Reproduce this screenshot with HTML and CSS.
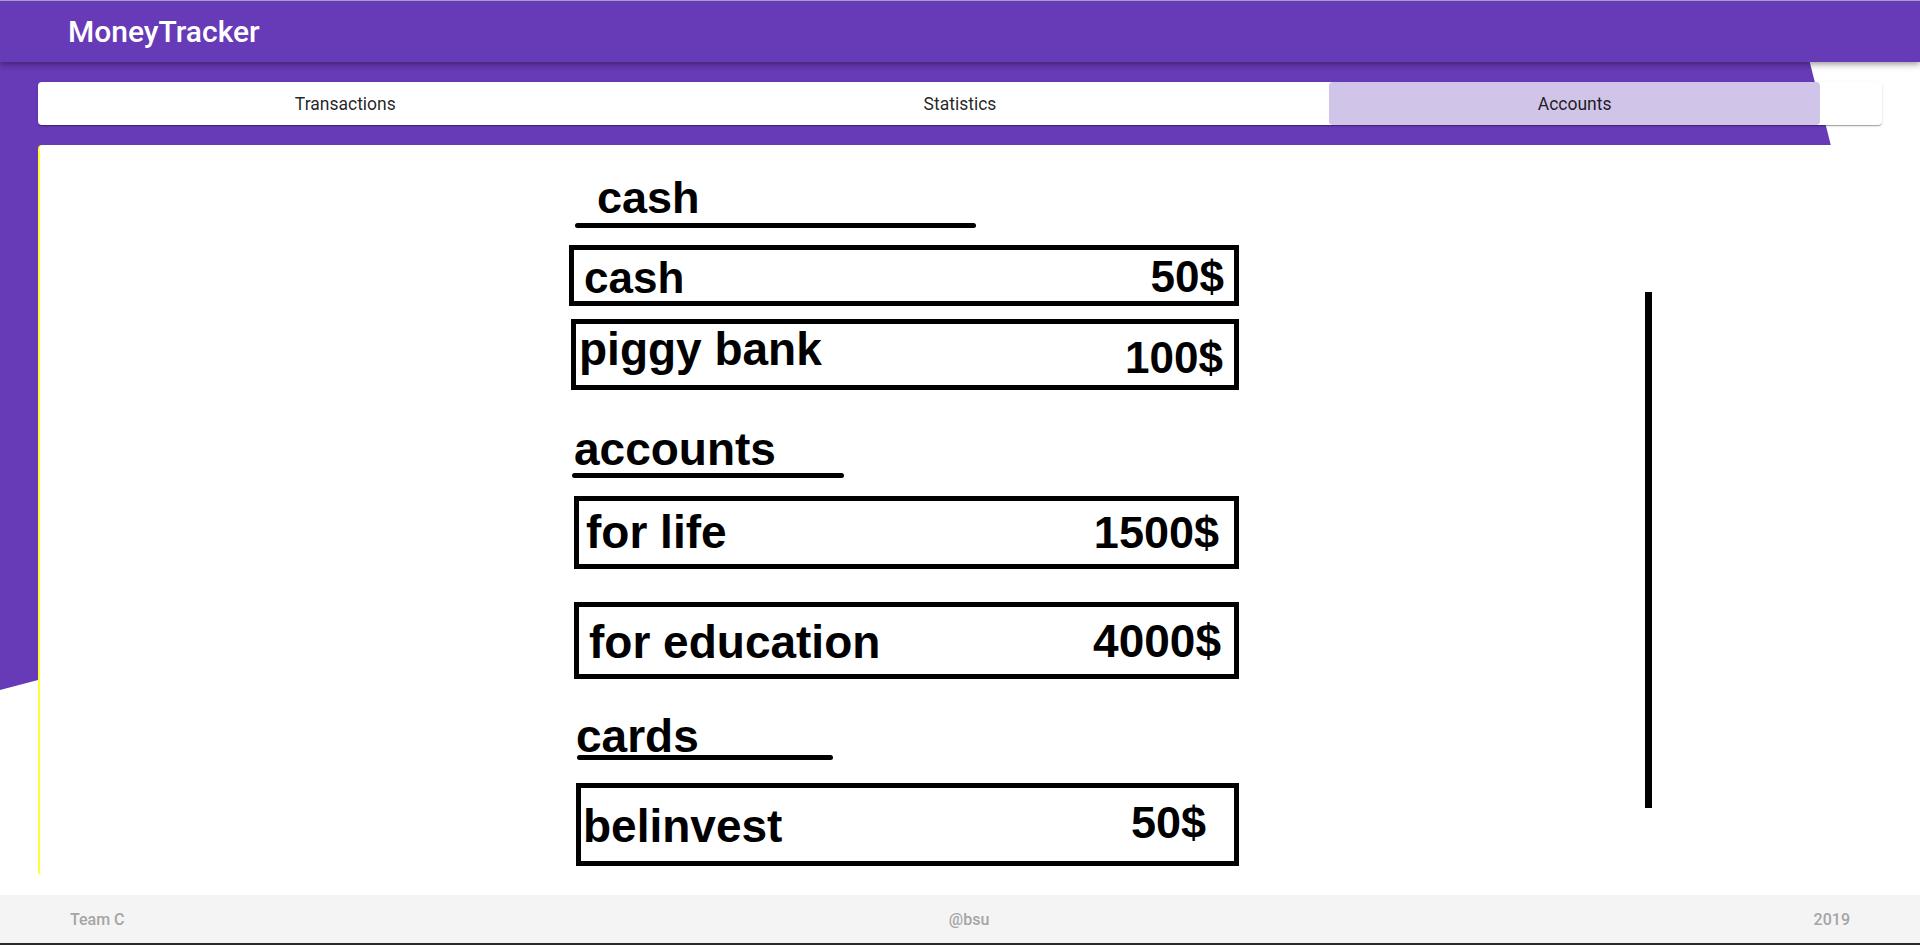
FILE: index.html
```html
<!DOCTYPE html>
<html lang="en">
<head>
<meta charset="utf-8">
<title>MoneyTracker</title>
<link rel="stylesheet" href="styles.css">
</head>
<body>
<div class="page">
  <div class="backdrop"></div>
  <header class="toolbar">
    <span class="brand">MoneyTracker</span>
  </header>
  <main class="main">
    <nav class="tabs">
      <div class="tab"><span class="tab-label">Transactions</span></div>
      <div class="tab"><span class="tab-label">Statistics</span></div>
      <div class="tab"><span class="tab-label tab-label--active">Accounts</span></div>
    </nav>
    <section class="card">
      <div class="sketch">
        <div class="title title--cash">cash</div>
        <div class="rule rule--cash"></div>
        <div class="entry entry--cash"><span class="entry-name">cash</span><span class="entry-sum">50$</span></div>
        <div class="entry entry--piggy"><span class="entry-name">piggy bank</span><span class="entry-sum">100$</span></div>

        <div class="title title--accounts">accounts</div>
        <div class="rule rule--accounts"></div>
        <div class="entry entry--life"><span class="entry-name">for life</span><span class="entry-sum">1500$</span></div>
        <div class="entry entry--edu"><span class="entry-name">for education</span><span class="entry-sum">4000$</span></div>

        <div class="title title--cards">cards</div>
        <div class="rule rule--cards"></div>
        <div class="entry entry--bel"><span class="entry-name">belinvest</span><span class="entry-sum">50$</span></div>
      </div>
      <div class="vbar"></div>
    </section>
  </main>
  <footer class="footer">
    <span class="footer-item">Team C</span>
    <span class="footer-item">@bsu</span>
    <span class="footer-item">2019</span>
  </footer>
</div>
</body>
</html>
```
FILE: styles.css
```css
html, body {
  margin: 0;
  padding: 0;
  background: #ffffff;
}

body {
  font-family: Roboto, "Liberation Sans", Arial, sans-serif;
  overflow: hidden;
}

.page {
  position: relative;
  width: 1920px;
  height: 945px;
  display: flex;
  flex-direction: column;
}

.backdrop {
  position: absolute;
  top: 0;
  left: 0;
  width: 1920px;
  height: 700px;
  background: #673ab7;
  clip-path: polygon(0 0, 1794px 0, 1846px 205px, 0 690px);
  z-index: 0;
}

.toolbar {
  position: relative;
  z-index: 3;
  box-sizing: border-box;
  height: 62px;
  background: #673ab7;
  border-top: 1px solid #a79dbb;
  display: flex;
  align-items: center;
  padding-left: 68px;
  box-shadow: 0 2px 4px -1px rgba(0,0,0,.2), 0 4px 5px 0 rgba(0,0,0,.14), 0 1px 10px 0 rgba(0,0,0,.12);
}

.brand {
  color: #ffffff;
  font-family: Roboto, sans-serif;
  font-weight: 500;
  font-size: 30px;
  line-height: 1;
}

.main {
  position: relative;
  z-index: 1;
  padding: 20px 38px 20px 38px;
  display: flex;
  flex-direction: column;
  gap: 20px;
}

.tabs {
  height: 43px;
  background: #ffffff;
  border-radius: 4px;
  display: grid;
  grid-template-columns: 1fr 1fr 1fr;
  box-shadow: 0 2px 1px -1px rgba(0,0,0,.2), 0 1px 1px 0 rgba(0,0,0,.14), 0 1px 3px 0 rgba(0,0,0,.12);
}

.tab {
  display: flex;
  justify-content: center;
}

.tab-label {
  width: 491px;
  height: 43px;
  display: flex;
  align-items: center;
  justify-content: center;
  font-family: Roboto, sans-serif;
  font-size: 17.5px;
  font-weight: 400;
  color: rgba(0,0,0,.87);
  border-radius: 4px;
}

.tab-label--active {
  background: #d1c4e9;
}

.card {
  height: 730px;
  background: #ffffff;
  border-left: 2px solid #ffff33;
  border-radius: 4px;
  display: flex;
  align-items: flex-start;
  padding-left: 529px;
}

.sketch {
  width: 670px;
  display: flex;
  flex-direction: column;
  align-items: flex-start;
  font-family: "Liberation Sans", Arial, sans-serif;
  font-weight: bold;
  color: #000000;
}

.title {
  font-size: 46px;
  line-height: 1;
}

.title--cash {
  font-size: 45px;
  margin: 30px 0 0 28px;
}

.title--accounts {
  margin: 36px 0 0 5px;
}

.title--cards {
  margin: 34px 0 0 7px;
}

.rule {
  height: 5px;
  background: #000000;
  border-radius: 3px;
}

.rule--cash {
  width: 401px;
  margin: 3px 0 0 6px;
}

.rule--accounts {
  width: 272px;
  margin: 1px 0 0 3px;
}

.rule--cards {
  width: 256px;
  margin: -4px 0 0 8px;
}

.entry {
  box-sizing: border-box;
  align-self: stretch;
  display: flex;
  justify-content: space-between;
  align-items: flex-start;
  border: 5px solid #000000;
  font-size: 46px;
  line-height: 1;
}

.entry-name,
.entry-sum {
  line-height: 1;
  white-space: nowrap;
}

.entry--cash {
  margin: 17px 0 0 0;
  height: 61px;
  padding: 0 10px 0 10px;
}
.entry--cash .entry-name { font-size: 44px; margin-top: 6px; }
.entry--cash .entry-sum { font-size: 44px; margin-top: 5px; }

.entry--piggy {
  margin: 13px 0 0 2px;
  height: 71px;
  padding: 0 11px 0 3px;
}
.entry--piggy .entry-name { margin-top: 2px; }
.entry--piggy .entry-sum { font-size: 44px; margin-top: 12px; }

.entry--life {
  margin: 18px 0 0 5px;
  height: 73px;
  padding: 0 15px 0 7px;
}
.entry--life .entry-name { margin-top: 8px; }
.entry--life .entry-sum { font-size: 45px; margin-top: 9px; }

.entry--edu {
  margin: 33px 0 0 5px;
  height: 77px;
  padding: 0 13px 0 10px;
}
.entry--edu .entry-name { margin-top: 12px; }
.entry--edu .entry-sum { margin-top: 11px; }

.entry--bel {
  margin: 23px 0 0 7px;
  height: 83px;
  padding: 0 28px 0 2px;
}
.entry--bel .entry-name { margin-top: 15px; }
.entry--bel .entry-sum { font-size: 45px; margin-top: 12px; }

.vbar {
  width: 7px;
  height: 516px;
  margin: 147px 0 0 406px;
  background: #000000;
}

.footer {
  box-sizing: border-box;
  height: 50px;
  margin-top: auto;
  background: #f4f4f4;
  border-bottom: 2px solid #2a2a2a;
  display: flex;
  justify-content: space-between;
  align-items: center;
  padding: 0 70px;
}

.footer-item {
  font-family: Roboto, sans-serif;
  font-weight: 500;
  font-size: 16px;
  color: #a5a5a5;
}
```
